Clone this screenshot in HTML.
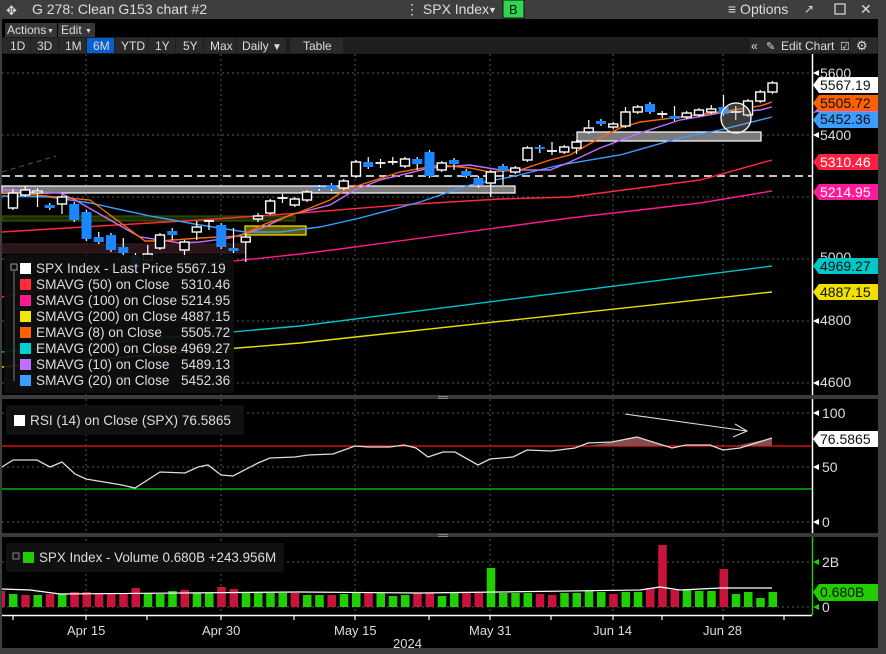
<!DOCTYPE html>
<html><head><meta charset="utf-8"><style>
html,body{margin:0;padding:0;background:#000;width:886px;height:654px;overflow:hidden}
svg{display:block;font-family:"Liberation Sans",sans-serif}
</style></head><body>
<svg id="s" width="886" height="654" viewBox="0 0 886 654" xmlns="http://www.w3.org/2000/svg">
<rect width="886" height="654" fill="#000"/>
<rect x="0" y="0" width="886" height="19" fill="#3e3e3e"/>
<rect x="878" y="0" width="8" height="654" fill="#3e3e3e"/>
<rect x="0" y="648" width="886" height="6" fill="#3e3e3e"/>
<rect x="0" y="19" width="2" height="635" fill="#3e3e3e"/>
<g fill="#ddd" font-size="14">
<text x="6" y="15" font-size="13">✥</text>
<text x="32" y="14">G 278: Clean G153 chart #2</text>
<text x="405" y="14">⋮ SPX Index</text>
<text x="488" y="13" font-size="9">▼</text>
<text x="728" y="14">≡ Options</text>
<text x="804" y="13" font-size="12">↗</text>
<rect x="835" y="4" width="10" height="10" fill="none" stroke="#ddd" stroke-width="1.2"/>
<text x="860" y="14" font-size="14">✕</text>
</g>
<rect x="503" y="0" width="21" height="18" fill="#2fd64f" stroke="#111"/>
<text x="509" y="14" font-size="13" fill="#111">B</text>
<rect x="2" y="37" width="876" height="17" fill="#1e1e1e"/>
<rect x="5" y="23" width="52" height="14" fill="#363636"/>
<rect x="58" y="23" width="37" height="14" fill="#363636"/>
<g fill="#ddd" font-size="12">
<text x="7" y="34">Actions</text><text x="47" y="33" font-size="7">▼</text>
<text x="61" y="34">Edit</text><text x="85" y="33" font-size="7">▼</text>
</g>
<g fill="#2a2a2a">
<rect x="3" y="38" width="27" height="15"/><rect x="31" y="38" width="27" height="15"/><rect x="59" y="38" width="27" height="15"/>
<rect x="87" y="38" width="27" height="15" fill="#0a5fcf"/><rect x="115" y="38" width="32" height="15"/><rect x="148" y="38" width="27" height="15"/>
<rect x="176" y="38" width="27" height="15"/><rect x="204" y="38" width="32" height="15"/><rect x="237" y="38" width="49" height="15"/>
<rect x="290" y="38" width="53" height="15"/>
<rect x="750" y="38" width="70" height="15" fill="#2a2a2a"/><rect x="821" y="38" width="27" height="15"/><rect x="850" y="38" width="27" height="15"/>
</g>
<g fill="#ddd" font-size="12">
<text x="10" y="50">1D</text><text x="37" y="50">3D</text><text x="65" y="50">1M</text><text x="93" y="50">6M</text>
<text x="121" y="50">YTD</text><text x="155" y="50">1Y</text><text x="183" y="50">5Y</text><text x="210" y="50">Max</text>
<text x="242" y="50">Daily</text><text x="272" y="50" font-size="10">▼</text><text x="303" y="50">Table</text>
<text x="751" y="50">«</text><text x="766" y="50" font-size="11">✎</text><text x="781" y="50">Edit Chart</text>
<text x="840" y="50" font-size="11">☑</text><text x="856" y="50" font-size="13">⚙</text>
</g>
<g stroke="#5a5a5a" stroke-dasharray="2,3" stroke-width="1">
<line x1="86" y1="54" x2="86" y2="615"/><line x1="221" y1="54" x2="221" y2="615"/><line x1="355" y1="54" x2="355" y2="615"/>
<line x1="490" y1="54" x2="490" y2="615"/><line x1="613" y1="54" x2="613" y2="615"/><line x1="723" y1="54" x2="723" y2="615"/>
<line x1="2" y1="73" x2="812" y2="73"/><line x1="2" y1="135" x2="812" y2="135"/><line x1="2" y1="197" x2="812" y2="197"/>
<line x1="2" y1="259" x2="812" y2="259"/><line x1="2" y1="321" x2="812" y2="321"/><line x1="2" y1="383" x2="812" y2="383"/>
<line x1="2" y1="413" x2="812" y2="413"/><line x1="2" y1="467" x2="812" y2="467"/><line x1="2" y1="522" x2="812" y2="522"/>
<line x1="2" y1="562" x2="812" y2="562"/><line x1="2" y1="607" x2="812" y2="607"/>
</g>
<line x1="2" y1="172" x2="56" y2="156" stroke="#555" stroke-dasharray="5,4"/>
<rect x="2" y="216" width="293" height="5" fill="#1c2e00" stroke="#3d5c00"/>
<rect x="2" y="244" width="243" height="9" fill="#2a1418" stroke="#3a2228"/>
<line x1="2" y1="176" x2="812" y2="176" stroke="#fff" stroke-width="1.5" stroke-dasharray="8,5"/>
<rect x="2" y="186" width="513" height="7" fill="#7a7a7a" stroke="#fff" stroke-width="1.2"/>
<rect x="577" y="132" width="184" height="9" fill="#7a7a7a" stroke="#fff" stroke-width="1.2"/>
<rect x="245" y="226" width="61" height="9" fill="#7a7200" fill-opacity="0.8" stroke="#ffe800" stroke-width="1.2"/>
<g fill="none" stroke-width="1.4">
<polyline stroke="#e8e000" points="2,367 300,343 772,292"/>
<polyline stroke="#00c4c8" points="2,352 300,326 772,266"/>
<polyline stroke="#ff1a8c" points="2,297 150,270 300,254 340,249 570,218 700,203 772,191"/>
<polyline stroke="#ff2a3a" points="2,232 100,226 200,220 300,213 400,205 500,199 570,197 700,180 772,160"/>
<polyline stroke="#3c9cff" points="2,196 50,197 90,203 150,216 200,225 245,232 280,232 320,227 360,218 420,202 470,185 515,176 560,165 620,155 680,138 720,130 772,117"/>
<polyline stroke="#c070ff" points="2,190 60,193 75,200 110,220 140,237 180,243 200,242 230,238 260,229 290,215 330,205 355,190 380,180 430,168 470,165 500,170 550,170 570,162 600,148 640,133 680,120 720,113 760,110 772,107"/>
<polyline stroke="#ff6a00" points="2,192 90,200 110,215 145,241 160,241 200,238 240,236 265,224 300,212 330,200 345,190 360,185 400,172 440,165 470,168 490,172 520,170 550,160 570,155 600,138 620,128 640,122 680,117 720,112 760,106 772,102"/>
</g>
<g id="candles"></g>
<circle cx="736" cy="118" r="15" fill="#aaa" fill-opacity="0.35" stroke="#fff" stroke-width="1.3"/>
<rect x="4" y="255" width="230" height="138" rx="3" fill="#0e0e0e" fill-opacity="0.92"/>
<rect x="11" y="264" width="6" height="6" fill="none" stroke="#999"/>
<line x1="14" y1="271" x2="14" y2="381" stroke="#777"/>
<g fill="#ddd" font-size="13.6">
<rect x="20" y="263" width="11" height="11" fill="#fff"/><text x="36" y="273">SPX Index - Last Price 5567.19</text>
<rect x="20" y="279" width="11" height="11" fill="#ff2a3a"/><text x="36" y="289">SMAVG (50)  on Close</text><text x="181" y="289">5310.46</text>
<rect x="20" y="295" width="11" height="11" fill="#ff1a8c"/><text x="36" y="305">SMAVG (100) on Close</text><text x="181" y="305">5214.95</text>
<rect x="20" y="311" width="11" height="11" fill="#f0e800"/><text x="36" y="321">SMAVG (200) on Close</text><text x="181" y="321">4887.15</text>
<rect x="20" y="327" width="11" height="11" fill="#ff6000"/><text x="36" y="337">EMAVG (8)  on Close</text><text x="181" y="337">5505.72</text>
<rect x="20" y="343" width="11" height="11" fill="#00d0d0"/><text x="36" y="353">EMAVG (200) on Close</text><text x="181" y="353">4969.27</text>
<rect x="20" y="359" width="11" height="11" fill="#c070ff"/><text x="36" y="369">SMAVG (10)  on Close</text><text x="181" y="369">5489.13</text>
<rect x="20" y="375" width="11" height="11" fill="#3c9cff"/><text x="36" y="385">SMAVG (20)  on Close</text><text x="181" y="385">5452.36</text>
</g>
<rect x="2" y="395" width="876" height="4" fill="#3a3a3a"/>
<rect x="2" y="533" width="876" height="4" fill="#3a3a3a"/>
<rect x="6" y="405" width="238" height="30" rx="3" fill="#111"/>
<rect x="14" y="415" width="11" height="11" fill="#fff"/>
<text x="30" y="425" fill="#ddd" font-size="13.6">RSI (14)  on Close (SPX) 76.5865</text>
<line x1="2" y1="446" x2="812" y2="446" stroke="#ff1010" stroke-width="1.2"/>
<line x1="2" y1="489" x2="812" y2="489" stroke="#10d010" stroke-width="1.2"/>
<polygon fill="#8a4a4a" points="588,446 612,442 637,437 665,446 720,446 735,446 772,438 772,446"/>
<polyline fill="none" stroke="#ddd" stroke-width="1.3" points="2,467 13,460 37,460 50,467 62,462 75,474 86,479 110,483 122,485 135,488 160,472 185,473 198,467 208,465 221,475 233,476 258,463 270,458 295,457 308,455 333,454 355,446 368,447 390,447 404,445 416,448 428,457 443,452 455,452 478,465 490,459 513,457 527,450 551,451 575,448 588,443 612,442 637,437 672,448 686,445 710,445 723,450 740,448 772,438"/>
<polyline fill="none" stroke="#ddd" stroke-width="1.1" points="625,414 747,431"/>
<polyline fill="none" stroke="#ddd" stroke-width="1.1" points="735,424 747,431 733,437"/>
<rect x="6" y="543" width="278" height="29" rx="3" fill="#111"/>
<rect x="13" y="553" width="6" height="6" fill="none" stroke="#888"/>
<rect x="23" y="552" width="11" height="11" fill="#22cc00"/>
<text x="39" y="562" fill="#ddd" font-size="13.4">SPX Index - Volume 0.680B  +243.956M</text>
<g id="vol"></g>
<polyline fill="none" stroke="#fff" stroke-width="1.2" points="2,589 30,590 60,594 300,592 420,593 500,592 640,590 660,587 680,590 720,588 772,588"/>
<line x1="812.5" y1="54" x2="812.5" y2="395" stroke="#fff" stroke-width="1.5"/>
<line x1="812.5" y1="399" x2="812.5" y2="533" stroke="#fff" stroke-width="1.5"/>
<line x1="812.5" y1="537" x2="812.5" y2="615" stroke="#22cc00" stroke-width="1.5"/>
<line x1="2" y1="615.5" x2="812" y2="615.5" stroke="#fff" stroke-width="1.5"/>
<g stroke="#fff" stroke-width="1.2">
<line x1="13" y1="616" x2="13" y2="620"/><line x1="86" y1="616" x2="86" y2="620"/><line x1="147" y1="616" x2="147" y2="620"/>
<line x1="221" y1="616" x2="221" y2="620"/><line x1="294" y1="616" x2="294" y2="620"/><line x1="355" y1="616" x2="355" y2="620"/>
<line x1="429" y1="616" x2="429" y2="620"/><line x1="490" y1="616" x2="490" y2="620"/><line x1="551" y1="616" x2="551" y2="620"/>
<line x1="613" y1="616" x2="613" y2="620"/><line x1="662" y1="616" x2="662" y2="620"/><line x1="723" y1="616" x2="723" y2="620"/><line x1="784" y1="616" x2="784" y2="620"/>
</g>
<g fill="#ddd" font-size="13">
<text x="67" y="635">Apr 15</text><text x="202" y="635">Apr 30</text><text x="334" y="635">May 15</text>
<text x="469" y="635">May 31</text><text x="593" y="635">Jun 14</text><text x="703" y="635">Jun 28</text>
<text x="393" y="648">2024</text>
</g>
<g fill="#fff">
<polygon points="813,73 819,70 819,76"/><polygon points="813,135 819,132 819,138"/><polygon points="813,321 819,318 819,324"/><polygon points="813,383 819,380 819,386"/>
<polygon points="813,413 819,410 819,416"/><polygon points="813,467 819,464 819,470"/><polygon points="813,522 819,519 819,525"/>
</g>
<g fill="#22cc00"><polygon points="813,562 819,559 819,565"/><polygon points="813,607 819,604 819,610"/></g>
<g font-size="14">
<text x="820" y="78" fill="#ddd">5600</text>
<text x="820" y="262" fill="#ddd">5000</text>
<polygon points="813,85 819,77 878,77 878,93 819,93" fill="#fff"/><text x="820" y="90" fill="#111">5567.19</text>
<polygon points="813,120 819,112 878,112 878,128 819,128" fill="#3c9cff"/><text x="820" y="124" fill="#111">5452.36</text>
<polygon points="813,113 819,107 878,107 878,112 819,112" fill="#c070ff"/>
<polygon points="813,103 819,95 878,95 878,111 819,111" fill="#ff6000"/><text x="820" y="108" fill="#111">5505.72</text>
<text x="820" y="140" fill="#ddd">5400</text>
<polygon points="813,162 819,154 878,154 878,170 819,170" fill="#ff2040"/><text x="820" y="167" fill="#fff">5310.46</text>
<polygon points="813,192 819,184 878,184 878,200 819,200" fill="#ff1a9c"/><text x="820" y="197" fill="#fff">5214.95</text>
<polygon points="813,266 819,258 878,258 878,274 819,274" fill="#00c8c8"/><text x="820" y="271" fill="#111">4969.27</text>
<polygon points="813,292 819,284 878,284 878,300 819,300" fill="#f0e000"/><text x="820" y="297" fill="#111">4887.15</text>
<text x="820" y="325" fill="#ddd">4800</text><text x="820" y="387" fill="#ddd">4600</text>
<text x="822" y="418" fill="#ddd">100</text>
<polygon points="813,439 819,431 878,431 878,447 819,447" fill="#fff"/><text x="820" y="444" fill="#111">76.5865</text>
<text x="822" y="472" fill="#ddd">50</text><text x="822" y="527" fill="#ddd">0</text>
<text x="822" y="567" fill="#ddd">2B</text>
<polygon points="813,592 819,584 878,584 878,601 819,601" fill="#22cc00"/><text x="820" y="597" fill="#111">0.680B</text>
<text x="822" y="612" fill="#ddd">0</text>
</g>
<g fill="#888"><rect x="438" y="396" width="10" height="1"/><rect x="438" y="398" width="10" height="1"/><rect x="438" y="534" width="10" height="1"/><rect x="438" y="536" width="10" height="1"/></g>
</svg>
<script>
var NS="http://www.w3.org/2000/svg";
function el(p,t,a){var e=document.createElementNS(NS,t);for(var k in a)e.setAttribute(k,a[k]);p.appendChild(e);return e;}
var C=[[193,208,1,189,210],[190,195,1,186,197],[191,193,1,188,207],[205,208,0,203,210],[197,204,1,195,214],
[204,220,0,202,222],[212,239,0,210,241],[237,242,0,232,244],[235,250,0,233,252],[247,253,0,238,255],
[255,268,0,253,270],[254,260,1,245,262],[235,248,1,233,250],[231,235,0,228,240],[242,250,1,240,258],
[227,232,1,221,240],[221,222,2,220,230],[225,247,0,223,249],[248,251,0,228,253],[237,242,1,233,262],
[216,219,1,213,222],[201,213,1,199,215],[198,199,2,194,203],[199,205,1,197,207],[192,200,1,190,202],
[187,189,0,185,191],[185,189,0,183,191],[181,188,1,179,190],[162,176,1,160,178],[162,167,0,157,169],
[163,164,2,159,168],[162,163,2,157,165],[159,166,1,157,168],[159,164,0,157,170],[152,176,0,150,178],
[163,170,1,161,172],[160,164,0,158,170],[171,176,0,169,178],[178,185,0,176,188],[172,183,1,170,197],
[166,171,0,164,185],[168,172,1,166,174],[148,160,1,146,162],[147,149,0,145,153],[151,152,2,142,155],
[147,152,1,145,154],[142,148,1,140,154],[128,132,1,120,134],[121,124,0,119,126],[124,127,1,122,129],
[112,126,1,107,128],[107,112,1,105,114],[104,112,0,102,114],[114,115,2,111,118],[116,119,0,106,121],
[113,117,1,111,119],[110,115,1,108,117],[109,112,1,105,114],[107,114,0,95,116],[112,113,2,106,120],
[101,115,1,99,117],[92,101,1,90,103],[83,92,1,81,94]];
var g=document.getElementById("candles");
for(var i=0;i<C.length;i++){var c=C[i],x=13+12.25*i;
 el(g,"line",{x1:x,y1:c[3],x2:x,y2:c[4],stroke:"#fff","stroke-width":1.2});
 if(c[2]==2){el(g,"line",{x1:x-5,y1:c[0],x2:x+5,y2:c[0],stroke:"#fff","stroke-width":1.8});}
 else if(c[2]==1){el(g,"rect",{x:x-4.5,y:c[0],width:9,height:Math.max(2,c[1]-c[0]),fill:"#000",stroke:"#fff","stroke-width":1.4});}
 else{el(g,"rect",{x:x-5,y:c[0],width:10,height:Math.max(2,c[1]-c[0]),fill:"#1a86ff"});}
}
var VT=[594,595,595,594,594,592,592,594,594,594,588,593,594,591,590,593,593,587,589,592,592,593,593,593,595,595,595,594,593,593,593,596,595,593,593,596,
593,593,593,568,593,593,593,594,595,593,593,591,592,594,592,592,588,545,590,590,591,591,569,594,592,598,592];
var VC="grgrgrrrrrrgggrggrrggggrggrggrgggrrg"+"grrggggrrggggrggrrrgggrgggg";
var v=document.getElementById("vol");
el(v,"rect",{x:2,y:591,width:3,height:16,fill:"#c8143c"});
for(var k=0;k<VT.length;k++){var x=9+12.25*k;
 el(v,"rect",{x:x,y:VT[k],width:8.5,height:607-VT[k],fill:VC[k]=="g"?"#1fcf00":"#c8143c"});}
</script>
</body></html>
